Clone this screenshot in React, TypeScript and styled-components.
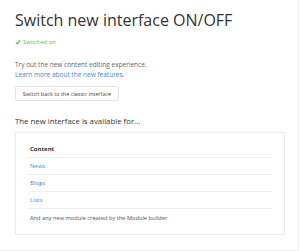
import React from "react";
import styled, { createGlobalStyle } from "styled-components";

const Global = createGlobalStyle`
  html, body { margin: 0; padding: 0; background: #fff; }
  body { font-family: "Open Sans", "Liberation Sans", sans-serif; }
  * { box-sizing: border-box; }
`;

const Page = styled.div`
  width: 299px;
  height: 251px;
  background: #fff;
  border-right: 1px solid #efefef;
  border-bottom: 1px solid #efefef;
  padding: 9px 15px 0 15px;
  display: flex;
  flex-direction: column;
`;

const Title = styled.h1`
  margin: 0;
  font-size: 16px;
  line-height: 22px;
  font-weight: 400;
  color: #333;
`;

const Status = styled.div`
  margin-top: 6px;
  display: flex;
  align-items: center;
  gap: 2px;
  font-size: 5.8px;
  line-height: 10px;
  color: #5cb85c;
`;

const Intro = styled.p`
  margin: 13px 0 0 0;
  font-size: 6.5px;
  line-height: 10px;
  color: #666;
`;

const Link = styled.a`
  color: #4189dc;
  text-decoration: none;
`;

const Button = styled.button`
  align-self: flex-start;
  margin-top: 6px;
  height: 15px;
  width: 104px;
  padding: 0;
  border: 1px solid #e3e3e3;
  border-radius: 2px;
  background: #fff;
  font-family: inherit;
  font-size: 5.5px;
  color: #444;
`;

const Subtitle = styled.h2`
  margin: 13px 0 0 0;
  font-size: 7.8px;
  line-height: 14px;
  font-weight: 400;
  color: #333;
`;

const Card = styled.div`
  margin-top: 4px;
  width: 270px;
  border: 1px solid #ebebeb;
  padding: 8px 12px 8px 12px;
`;

const Row = styled.div<{ $last?: boolean }>`
  height: 17px;
  display: flex;
  align-items: center;
  padding-left: 2px;
  font-size: 6px;
  border-bottom: ${(p) => (p.$last ? "none" : "1.5px solid #efefef")};
`;

const HeadCell = styled.span`
  font-weight: 700;
  color: #333;
`;

const LinkCell = styled.span`
  color: #4189dc;
`;

const TextCell = styled.span`
  color: #555;
  font-size: 5.7px;
`;

const Check = () => (
  <svg width="6" height="6" viewBox="0 0 10 10">
    <path d="M1.5 5.5 L4 8 L8.5 2" fill="none" stroke="#5cb85c" strokeWidth="2" />
  </svg>
);

export default function App() {
  return (
    <>
      <Global />
      <Page>
        <Title>Switch new interface ON/OFF</Title>
        <Status>
          <Check />
          <span>Switched on</span>
        </Status>
        <Intro>
          Try out the new content editing experience.
          <br />
          <Link href="#">Learn more about the new features.</Link>
        </Intro>
        <Button>Switch back to the classic interface</Button>
        <Subtitle>The new interface is available for...</Subtitle>
        <Card>
          <Row>
            <HeadCell>Content</HeadCell>
          </Row>
          <Row>
            <LinkCell>News</LinkCell>
          </Row>
          <Row>
            <LinkCell>Blogs</LinkCell>
          </Row>
          <Row>
            <LinkCell>Lists</LinkCell>
          </Row>
          <Row $last>
            <TextCell>And any new module created by the Module builder</TextCell>
          </Row>
        </Card>
      </Page>
    </>
  );
}
